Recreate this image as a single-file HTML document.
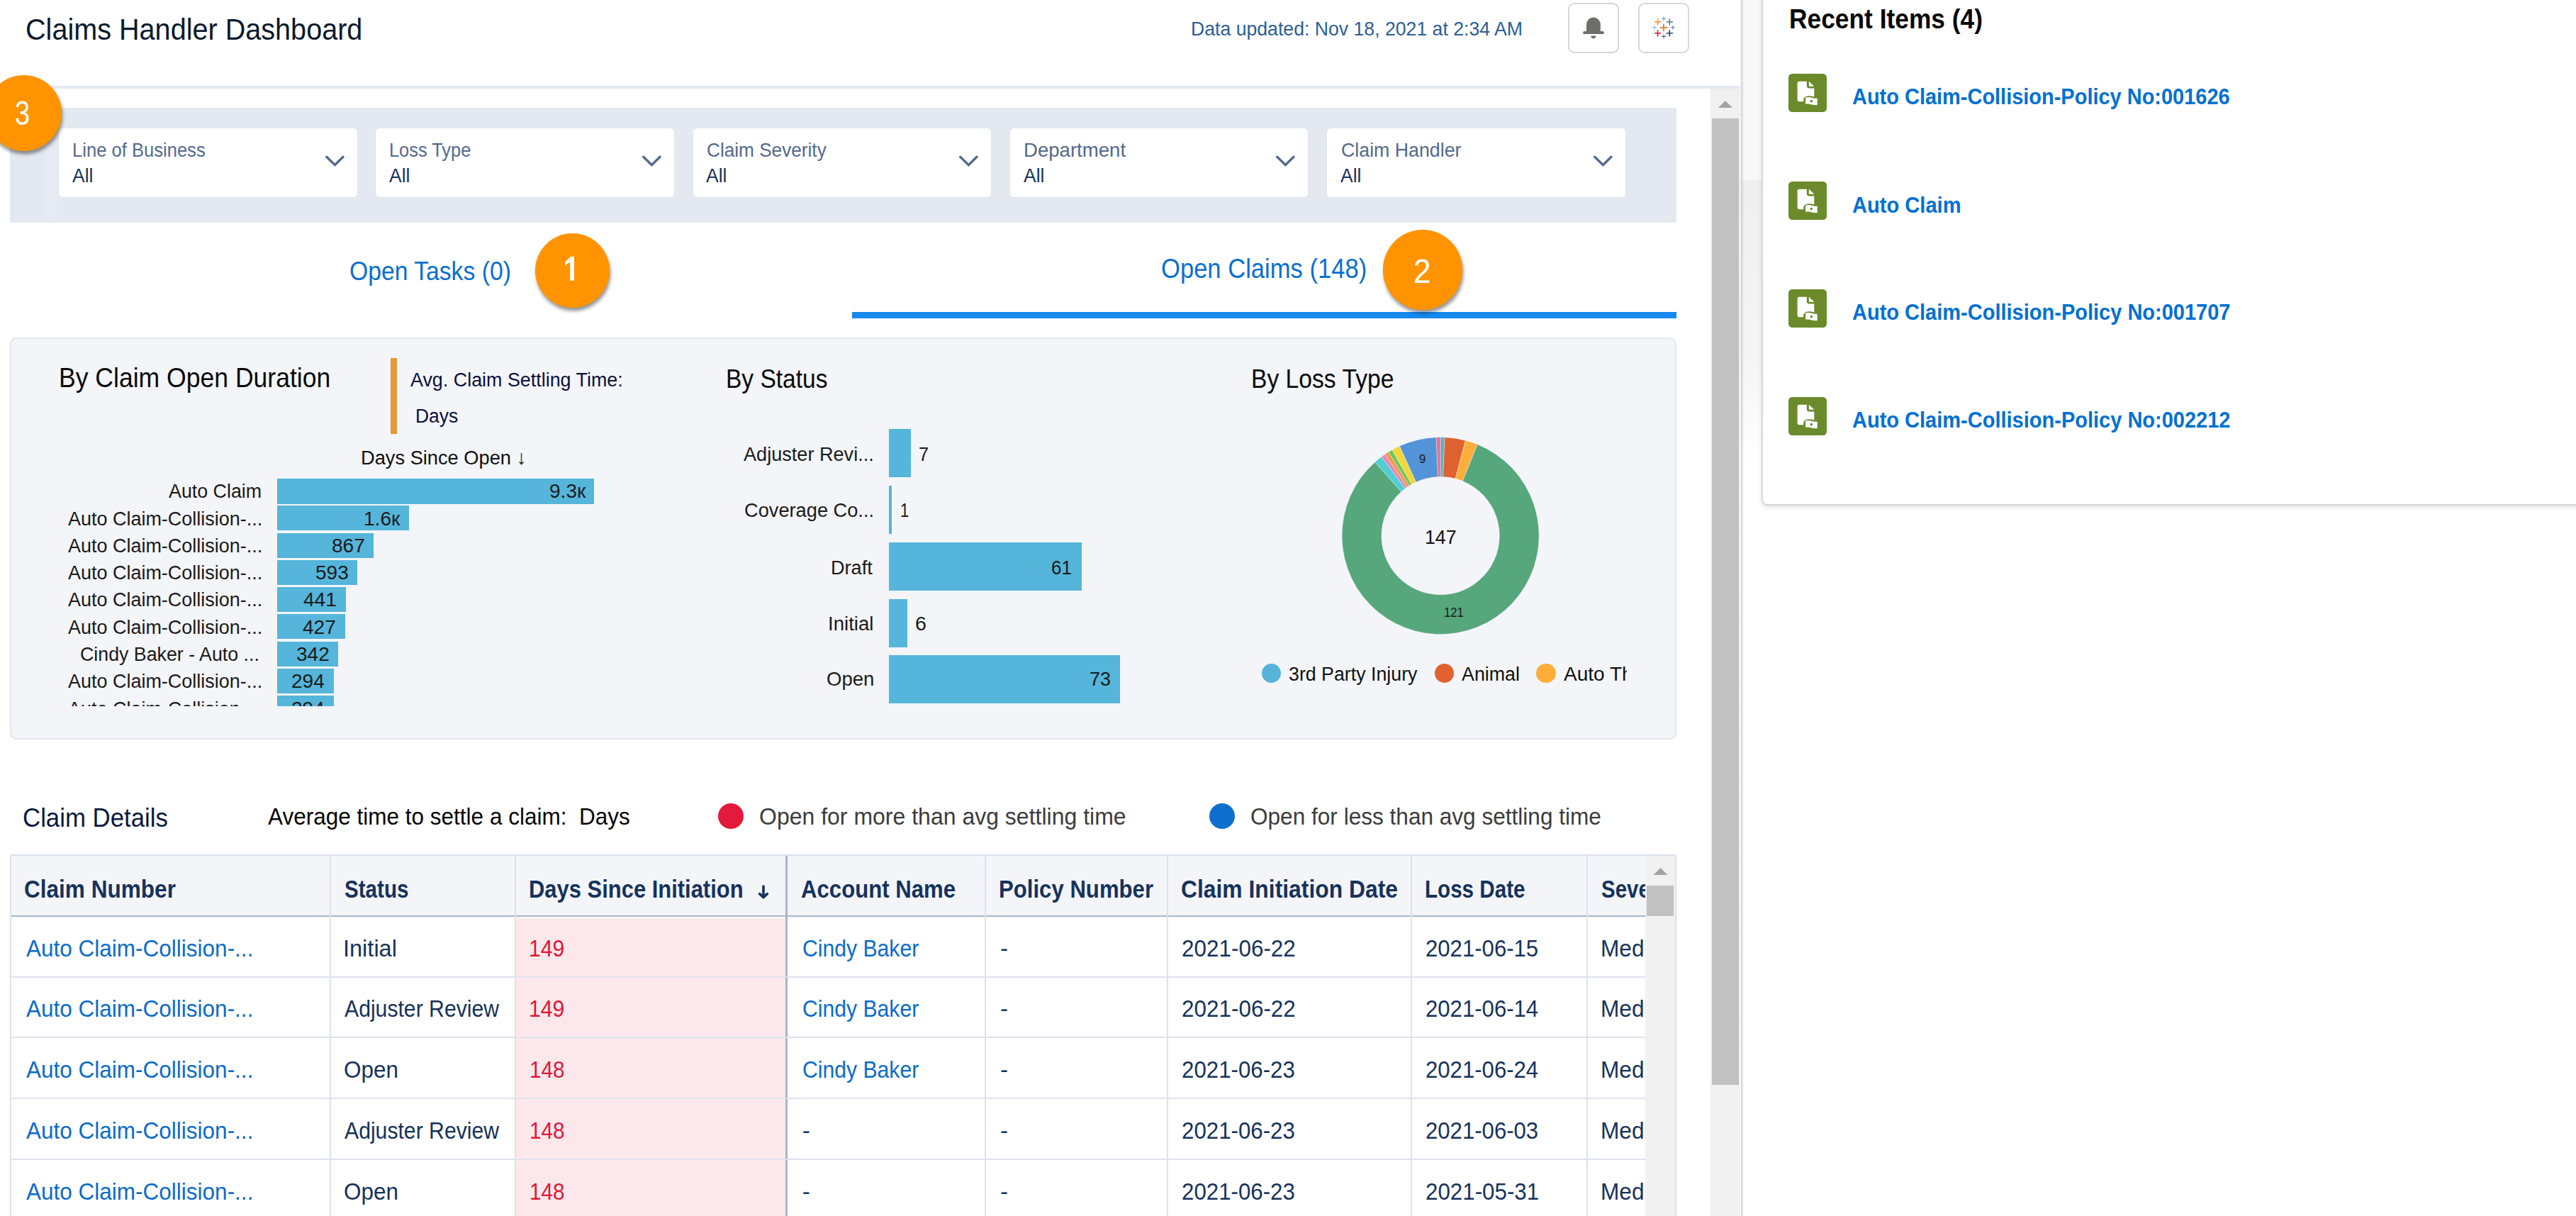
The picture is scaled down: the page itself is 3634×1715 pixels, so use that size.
<!DOCTYPE html>
<html><head><meta charset='utf-8'><title>Claims Handler Dashboard</title>
<style>
html,body{margin:0;padding:0;width:3634px;height:1715px;overflow:hidden;background:#fff;position:relative}
.t{position:absolute;white-space:pre;line-height:normal}
</style></head><body>
<div style='position:absolute;left:2212.00px;top:3.50px;width:71.50px;height:71.00px;box-sizing:border-box;border:2px solid #d9d7d5;border-radius:9px;background:#fff'></div><div style='position:absolute;left:2311.00px;top:3.50px;width:71.50px;height:71.00px;box-sizing:border-box;border:2px solid #d9d7d5;border-radius:9px;background:#fff'></div><svg style='position:absolute;left:2212px;top:3.5px' width='71.5' height='71' viewBox='0 0 71.5 71'>
<path d='M26 40 V30.5 A9.9 10 0 0 1 45.8 30.5 V40 H48.5 A2.4 2.2 0 0 1 50.9 42.2 A1.7 1.7 0 0 1 49.2 43.9 H22.7 A1.7 1.7 0 0 1 21 42.2 A2.4 2.2 0 0 1 23.4 40 Z' fill='#706e6b'/>
<path d='M32.3 46.5 H39.4 A3.55 3.7 0 0 1 32.3 46.5 Z' fill='#706e6b'/>
</svg><svg style='position:absolute;left:2311px;top:0' width='72' height='80' viewBox='2311 0 72 80'><path d='M2341.8 38.8 H2352.2 M2347 33.599999999999994 V44.0' stroke='#e8762c' stroke-width='1.8' fill='none'/><path d='M2334.0 30.9 H2343.2 M2338.6 26.299999999999997 V35.5' stroke='#eb9a3a' stroke-width='1.6' fill='none'/><path d='M2350.7000000000003 30.9 H2359.9 M2355.3 26.299999999999997 V35.5' stroke='#5b879b' stroke-width='1.6' fill='none'/><path d='M2334.0 46.8 H2343.2 M2338.6 42.199999999999996 V51.4' stroke='#c72035' stroke-width='1.6' fill='none'/><path d='M2350.7000000000003 46.8 H2359.9 M2355.3 42.199999999999996 V51.4' stroke='#1f457e' stroke-width='1.6' fill='none'/><path d='M2344.0 26.4 H2350.0 M2347 23.4 V29.4' stroke='#7ba4b0' stroke-width='1.1' fill='none'/><path d='M2331.0 38.8 H2337.0 M2334 35.8 V41.8' stroke='#8fb3bd' stroke-width='1.1' fill='none'/><path d='M2356.8 38.8 H2362.8 M2359.8 35.8 V41.8' stroke='#6b6fa6' stroke-width='1.1' fill='none'/><path d='M2344.0 51.4 H2350.0 M2347 48.4 V54.4' stroke='#5d6196' stroke-width='1.1' fill='none'/></svg><div style='position:absolute;left:14.00px;top:120.80px;width:2441.00px;height:3.90px;background:#e3e9f1'></div><div style='position:absolute;left:14.00px;top:152.00px;width:2351.00px;height:162.00px;background:#e4e9f1'></div><div style='position:absolute;left:62.60px;top:152.00px;width:18.50px;height:162.00px;background:#e6eaf2'></div><div style='position:absolute;left:83.00px;top:181.30px;width:420.50px;height:96.70px;background:#fff;border-radius:5.5px;box-shadow:0 0 0 0.8px #dde3ec'></div><svg style='position:absolute;left:455.50px;top:212px' width='34' height='30' viewBox='0 0 34 30'><path d='M4.7 9.2 L16.4 20.6 L28 9.2' stroke='#54698d' stroke-width='3.4' stroke-linecap='round' fill='none'/></svg><div style='position:absolute;left:530.25px;top:181.30px;width:420.50px;height:96.70px;background:#fff;border-radius:5.5px;box-shadow:0 0 0 0.8px #dde3ec'></div><svg style='position:absolute;left:902.75px;top:212px' width='34' height='30' viewBox='0 0 34 30'><path d='M4.7 9.2 L16.4 20.6 L28 9.2' stroke='#54698d' stroke-width='3.4' stroke-linecap='round' fill='none'/></svg><div style='position:absolute;left:977.50px;top:181.30px;width:420.50px;height:96.70px;background:#fff;border-radius:5.5px;box-shadow:0 0 0 0.8px #dde3ec'></div><svg style='position:absolute;left:1350.00px;top:212px' width='34' height='30' viewBox='0 0 34 30'><path d='M4.7 9.2 L16.4 20.6 L28 9.2' stroke='#54698d' stroke-width='3.4' stroke-linecap='round' fill='none'/></svg><div style='position:absolute;left:1424.75px;top:181.30px;width:420.50px;height:96.70px;background:#fff;border-radius:5.5px;box-shadow:0 0 0 0.8px #dde3ec'></div><svg style='position:absolute;left:1797.25px;top:212px' width='34' height='30' viewBox='0 0 34 30'><path d='M4.7 9.2 L16.4 20.6 L28 9.2' stroke='#54698d' stroke-width='3.4' stroke-linecap='round' fill='none'/></svg><div style='position:absolute;left:1872.00px;top:181.30px;width:420.50px;height:96.70px;background:#fff;border-radius:5.5px;box-shadow:0 0 0 0.8px #dde3ec'></div><svg style='position:absolute;left:2244.50px;top:212px' width='34' height='30' viewBox='0 0 34 30'><path d='M4.7 9.2 L16.4 20.6 L28 9.2' stroke='#54698d' stroke-width='3.4' stroke-linecap='round' fill='none'/></svg><div style='position:absolute;left:1202.00px;top:440.00px;width:1163.00px;height:8.80px;background:#1589ee'></div><div style='position:absolute;left:14.00px;top:476.00px;width:2351.00px;height:566.80px;box-sizing:border-box;background:#f3f5f9;border:2px solid #e2e7ef;border-radius:9px'></div><div style='position:absolute;left:550.90px;top:505.00px;width:9.00px;height:106.80px;background:#e8963a'></div><div style='position:absolute;left:15px;top:660px;width:885px;height:336.3px;overflow:hidden'><div style='position:absolute;left:376.20px;top:15.40px;width:446.70px;height:35.2px;background:#55b5da'></div></div><div style='position:absolute;left:15px;top:660px;width:885px;height:336.3px;overflow:hidden'><div style='position:absolute;left:376.20px;top:53.10px;width:186.20px;height:35.2px;background:#55b5da'></div></div><div style='position:absolute;left:15px;top:660px;width:885px;height:336.3px;overflow:hidden'><div style='position:absolute;left:376.20px;top:91.70px;width:136.10px;height:35.2px;background:#55b5da'></div></div><div style='position:absolute;left:15px;top:660px;width:885px;height:336.3px;overflow:hidden'><div style='position:absolute;left:376.20px;top:130.00px;width:112.60px;height:35.2px;background:#55b5da'></div></div><div style='position:absolute;left:15px;top:660px;width:885px;height:336.3px;overflow:hidden'><div style='position:absolute;left:376.20px;top:168.30px;width:97.00px;height:35.2px;background:#55b5da'></div></div><div style='position:absolute;left:15px;top:660px;width:885px;height:336.3px;overflow:hidden'><div style='position:absolute;left:376.20px;top:206.30px;width:95.60px;height:35.2px;background:#55b5da'></div></div><div style='position:absolute;left:15px;top:660px;width:885px;height:336.3px;overflow:hidden'><div style='position:absolute;left:376.20px;top:244.60px;width:85.50px;height:35.2px;background:#55b5da'></div></div><div style='position:absolute;left:15px;top:660px;width:885px;height:336.3px;overflow:hidden'><div style='position:absolute;left:376.20px;top:282.90px;width:79.40px;height:35.2px;background:#55b5da'></div></div><div style='position:absolute;left:15px;top:660px;width:885px;height:336.3px;overflow:hidden'><div style='position:absolute;left:376.20px;top:321.20px;width:79.40px;height:35.2px;background:#55b5da'></div></div><div style='position:absolute;left:1253.50px;top:605.20px;width:31.30px;height:68.00px;background:#55b5da'></div><div style='position:absolute;left:1253.50px;top:685.00px;width:4.70px;height:68.00px;background:#55b5da'></div><div style='position:absolute;left:1253.50px;top:764.60px;width:272.30px;height:68.00px;background:#55b5da'></div><div style='position:absolute;left:1253.50px;top:844.50px;width:26.90px;height:68.00px;background:#55b5da'></div><div style='position:absolute;left:1253.50px;top:924.40px;width:326.30px;height:68.00px;background:#55b5da'></div><svg style='position:absolute;left:1880px;top:600px' width='310' height='310' viewBox='1880 600 310 310'><path d='M2032.10 616.60 A139 139 0 0 1 2038.04 616.73 L2035.66 672.48 A83.2 83.2 0 0 0 2032.10 672.40 Z' fill='#4eb3cf' stroke='#f3f5f9' stroke-opacity='0.6' stroke-width='0.7'/><path d='M2038.04 616.73 A139 139 0 0 1 2067.36 621.15 L2053.20 675.12 A83.2 83.2 0 0 0 2035.66 672.48 Z' fill='#df6130' stroke='#f3f5f9' stroke-opacity='0.6' stroke-width='0.7'/><path d='M2067.36 621.15 A139 139 0 0 1 2084.26 626.76 L2063.32 678.48 A83.2 83.2 0 0 0 2053.20 675.12 Z' fill='#fdae3a' stroke='#f3f5f9' stroke-opacity='0.6' stroke-width='0.7'/><path d='M2084.26 626.76 A139 139 0 1 1 1939.76 651.71 L1976.83 693.41 A83.2 83.2 0 1 0 2063.32 678.48 Z' fill='#56a77b' stroke='#f3f5f9' stroke-opacity='0.6' stroke-width='0.7'/><path d='M1939.76 651.71 A139 139 0 0 1 1948.96 644.20 L1982.34 688.92 A83.2 83.2 0 0 0 1976.83 693.41 Z' fill='#4fcfd5' stroke='#f3f5f9' stroke-opacity='0.6' stroke-width='0.7'/><path d='M1948.96 644.20 A139 139 0 0 1 1953.80 640.75 L1985.23 686.86 A83.2 83.2 0 0 0 1982.34 688.92 Z' fill='#e08bb9' stroke='#f3f5f9' stroke-opacity='0.6' stroke-width='0.7'/><path d='M1953.80 640.75 A139 139 0 0 1 1958.78 637.51 L1988.21 684.92 A83.2 83.2 0 0 0 1985.23 686.86 Z' fill='#f29a4c' stroke='#f3f5f9' stroke-opacity='0.6' stroke-width='0.7'/><path d='M1958.78 637.51 A139 139 0 0 1 1963.89 634.49 L1991.27 683.11 A83.2 83.2 0 0 0 1988.21 684.92 Z' fill='#6cc757' stroke='#f3f5f9' stroke-opacity='0.6' stroke-width='0.7'/><path d='M1963.89 634.49 A139 139 0 0 1 1974.48 629.11 L1997.61 679.89 A83.2 83.2 0 0 0 1991.27 683.11 Z' fill='#f2d73c' stroke='#f3f5f9' stroke-opacity='0.6' stroke-width='0.7'/><path d='M1974.48 629.11 A139 139 0 0 1 2026.16 616.73 L2028.54 672.48 A83.2 83.2 0 0 0 1997.61 679.89 Z' fill='#5394d8' stroke='#f3f5f9' stroke-opacity='0.6' stroke-width='0.7'/><path d='M2026.16 616.73 A139 139 0 0 1 2032.10 616.60 L2032.10 672.40 A83.2 83.2 0 0 0 2028.54 672.48 Z' fill='#e8718a' stroke='#f3f5f9' stroke-opacity='0.6' stroke-width='0.7'/></svg><div style='position:absolute;left:1780.05px;top:935.75px;width:27.30px;height:27.30px;background:#56b4d9;border-radius:50%'></div><div style='position:absolute;left:2023.95px;top:935.75px;width:27.30px;height:27.30px;background:#e0612f;border-radius:50%'></div><div style='position:absolute;left:2167.25px;top:935.75px;width:27.30px;height:27.30px;background:#ffae3a;border-radius:50%'></div><div style='position:absolute;left:1012.90px;top:1132.90px;width:36.10px;height:36.00px;background:#e31a3b;border-radius:50%'></div><div style='position:absolute;left:1705.90px;top:1132.90px;width:36.00px;height:36.00px;background:#0f6fcf;border-radius:50%'></div><div style='position:absolute;left:14.00px;top:1205.00px;width:2351.00px;height:515.00px;box-sizing:border-box;border:2px solid #dbe2eb;border-bottom:none;background:#fff'></div><div style='position:absolute;left:16.00px;top:1207.00px;width:2305.00px;height:84.00px;background:#f3f5f9'></div><div style='position:absolute;left:727.00px;top:1295.00px;width:381.00px;height:420.00px;background:#fce8ea'></div><div style='position:absolute;left:16.00px;top:1291.00px;width:2305.00px;height:2.00px;background:#a7b6c8'></div><div style='position:absolute;left:465.00px;top:1207.00px;width:2.00px;height:508.00px;background:#dde3ec'></div><div style='position:absolute;left:726.00px;top:1207.00px;width:2.00px;height:508.00px;background:#dde3ec'></div><div style='position:absolute;left:1389.00px;top:1207.00px;width:2.00px;height:508.00px;background:#dde3ec'></div><div style='position:absolute;left:1646.00px;top:1207.00px;width:2.00px;height:508.00px;background:#dde3ec'></div><div style='position:absolute;left:1990.00px;top:1207.00px;width:2.00px;height:508.00px;background:#dde3ec'></div><div style='position:absolute;left:2238.00px;top:1207.00px;width:2.00px;height:508.00px;background:#dde3ec'></div><div style='position:absolute;left:1108.00px;top:1207.00px;width:3.00px;height:508.00px;background:#a9b6c6'></div><div style='position:absolute;left:16.00px;top:1377.00px;width:2305.00px;height:2.00px;background:#dde3ec'></div><div style='position:absolute;left:16.00px;top:1462.00px;width:2305.00px;height:2.00px;background:#dde3ec'></div><div style='position:absolute;left:16.00px;top:1548.00px;width:2305.00px;height:2.00px;background:#dde3ec'></div><div style='position:absolute;left:16.00px;top:1634.00px;width:2305.00px;height:2.00px;background:#dde3ec'></div><svg style='position:absolute;left:1068px;top:1244px' width='20' height='28' viewBox='0 0 20 28'><path d='M9 6 V21' stroke='#16325c' stroke-width='3.6' stroke-linecap='round' fill='none'/><path d='M3.6 16.6 L9 21.6 L14.4 16.6' stroke='#16325c' stroke-width='3.6' stroke-linecap='round' fill='none'/></svg><div style='position:absolute;left:2321.00px;top:1207.00px;width:42.00px;height:508.00px;background:#f1f1f1'></div><svg style='position:absolute;left:2320.6px;top:1215px' width='42' height='30'><path d='M11.5 19 L21.5 9 L31.5 19 Z' fill='#a3a3a3'/></svg><div style='position:absolute;left:2323.00px;top:1249.00px;width:38.00px;height:42.50px;background:#c1c1c1'></div><div style='position:absolute;left:2413.00px;top:124.70px;width:42.00px;height:1590.30px;background:#f0f0f0'></div><svg style='position:absolute;left:2413px;top:130px' width='42' height='30'><path d='M11 22 L21 12 L31 22 Z' fill='#a3a3a3'/></svg><div style='position:absolute;left:2415.00px;top:167.00px;width:38.00px;height:1362.60px;background:#c1c1c1'></div><div style='position:absolute;left:2455.00px;top:0.00px;width:32.00px;height:1715.00px;background:linear-gradient(#f8f8f8 0, #f8f8f8 254px, #efefef 255px, #f6f6f6 520px, #ffffff 650px)'></div><div style='position:absolute;left:2455.50px;top:0.00px;width:2.70px;height:1715.00px;background:#d6d6d6'></div><div style='position:absolute;left:2458.20px;top:0.00px;width:3.80px;height:1715.00px;background:linear-gradient(90deg, rgba(0,0,0,0.05), rgba(0,0,0,0))'></div><div style='position:absolute;left:2485.00px;top:-10.00px;width:1165.00px;height:722.80px;box-sizing:border-box;background:#fff;border:2px solid #d9d7d5;border-radius:0 0 0 8px;box-shadow:0 3px 6px rgba(0,0,0,0.10)'></div><svg style='position:absolute;left:2523px;top:104px' width='54' height='54' viewBox='0 0 54 54'>
<rect width='54' height='54' rx='5.5' fill='#6b8a2b'/>
<path d='M15.4 10.7 H25.8 V17 Q25.8 20.4 29.2 20.4 H36.3 V32.6 Q30 30.3 25.5 31.8 Q21.2 33.3 21.2 37 V39.2 H15.3 Q12.6 39.2 12.6 36.5 V13.4 Q12.6 10.7 15.4 10.7 Z' fill='#fff'/>
<path d='M28.9 10.8 L36.3 17.8 H28.9 Z' fill='#fff'/>
<path d='M24 33.6 Q28 32.3 32 33.6 Q36 35 40.7 34.8 V44 Q36.5 44.6 32 43.3 Q28 42 24 42.6 Z' fill='#fff'/>
<circle cx='32.3' cy='38.6' r='1.8' fill='#6b8a2b'/>
</svg><svg style='position:absolute;left:2523px;top:256px' width='54' height='54' viewBox='0 0 54 54'>
<rect width='54' height='54' rx='5.5' fill='#6b8a2b'/>
<path d='M15.4 10.7 H25.8 V17 Q25.8 20.4 29.2 20.4 H36.3 V32.6 Q30 30.3 25.5 31.8 Q21.2 33.3 21.2 37 V39.2 H15.3 Q12.6 39.2 12.6 36.5 V13.4 Q12.6 10.7 15.4 10.7 Z' fill='#fff'/>
<path d='M28.9 10.8 L36.3 17.8 H28.9 Z' fill='#fff'/>
<path d='M24 33.6 Q28 32.3 32 33.6 Q36 35 40.7 34.8 V44 Q36.5 44.6 32 43.3 Q28 42 24 42.6 Z' fill='#fff'/>
<circle cx='32.3' cy='38.6' r='1.8' fill='#6b8a2b'/>
</svg><svg style='position:absolute;left:2523px;top:407.5px' width='54' height='54' viewBox='0 0 54 54'>
<rect width='54' height='54' rx='5.5' fill='#6b8a2b'/>
<path d='M15.4 10.7 H25.8 V17 Q25.8 20.4 29.2 20.4 H36.3 V32.6 Q30 30.3 25.5 31.8 Q21.2 33.3 21.2 37 V39.2 H15.3 Q12.6 39.2 12.6 36.5 V13.4 Q12.6 10.7 15.4 10.7 Z' fill='#fff'/>
<path d='M28.9 10.8 L36.3 17.8 H28.9 Z' fill='#fff'/>
<path d='M24 33.6 Q28 32.3 32 33.6 Q36 35 40.7 34.8 V44 Q36.5 44.6 32 43.3 Q28 42 24 42.6 Z' fill='#fff'/>
<circle cx='32.3' cy='38.6' r='1.8' fill='#6b8a2b'/>
</svg><svg style='position:absolute;left:2523px;top:560px' width='54' height='54' viewBox='0 0 54 54'>
<rect width='54' height='54' rx='5.5' fill='#6b8a2b'/>
<path d='M15.4 10.7 H25.8 V17 Q25.8 20.4 29.2 20.4 H36.3 V32.6 Q30 30.3 25.5 31.8 Q21.2 33.3 21.2 37 V39.2 H15.3 Q12.6 39.2 12.6 36.5 V13.4 Q12.6 10.7 15.4 10.7 Z' fill='#fff'/>
<path d='M28.9 10.8 L36.3 17.8 H28.9 Z' fill='#fff'/>
<path d='M24 33.6 Q28 32.3 32 33.6 Q36 35 40.7 34.8 V44 Q36.5 44.6 32 43.3 Q28 42 24 42.6 Z' fill='#fff'/>
<circle cx='32.3' cy='38.6' r='1.8' fill='#6b8a2b'/>
</svg>
<div class='t' style='left:35.83px;top:17.68px;font-size:42.44px;font-weight:400;color:#0b1a2c;font-family:"Liberation Sans",sans-serif;transform:scaleX(0.9331);transform-origin:0 0;'>Claims Handler Dashboard</div><div class='t' style='left:1679.75px;top:25.06px;font-size:27.33px;font-weight:400;color:#2d5e96;font-family:"Liberation Sans",sans-serif;transform:scaleX(0.9747);transform-origin:0 0;'>Data updated: Nov 18, 2021 at 2:34 AM</div><div class='t' style='left:101.93px;top:195.96px;font-size:27.33px;font-weight:400;color:#54698d;font-family:"Liberation Sans",sans-serif;transform:scaleX(0.9360);transform-origin:0 0;'>Line of Business</div><div class='t' style='left:101.90px;top:231.90px;font-size:27.62px;font-weight:400;color:#16325c;font-family:"Liberation Sans",sans-serif;transform:scaleX(0.9577);transform-origin:0 0;'>All</div><div class='t' style='left:549.19px;top:195.96px;font-size:27.33px;font-weight:400;color:#54698d;font-family:"Liberation Sans",sans-serif;transform:scaleX(0.9291);transform-origin:0 0;'>Loss Type</div><div class='t' style='left:549.15px;top:231.90px;font-size:27.62px;font-weight:400;color:#16325c;font-family:"Liberation Sans",sans-serif;transform:scaleX(0.9577);transform-origin:0 0;'>All</div><div class='t' style='left:997.34px;top:195.96px;font-size:27.33px;font-weight:400;color:#54698d;font-family:"Liberation Sans",sans-serif;transform:scaleX(0.9578);transform-origin:0 0;'>Claim Severity</div><div class='t' style='left:996.40px;top:231.90px;font-size:27.62px;font-weight:400;color:#16325c;font-family:"Liberation Sans",sans-serif;transform:scaleX(0.9577);transform-origin:0 0;'>All</div><div class='t' style='left:1443.53px;top:195.96px;font-size:27.33px;font-weight:400;color:#54698d;font-family:"Liberation Sans",sans-serif;transform:scaleX(1.0091);transform-origin:0 0;'>Department</div><div class='t' style='left:1443.65px;top:231.90px;font-size:27.62px;font-weight:400;color:#16325c;font-family:"Liberation Sans",sans-serif;transform:scaleX(0.9577);transform-origin:0 0;'>All</div><div class='t' style='left:1891.82px;top:195.96px;font-size:27.33px;font-weight:400;color:#54698d;font-family:"Liberation Sans",sans-serif;transform:scaleX(0.9788);transform-origin:0 0;'>Claim Handler</div><div class='t' style='left:1890.90px;top:231.90px;font-size:27.62px;font-weight:400;color:#16325c;font-family:"Liberation Sans",sans-serif;transform:scaleX(0.9577);transform-origin:0 0;'>All</div><div class='t' style='left:493.20px;top:360.82px;font-size:37.65px;font-weight:400;color:#0a6fd0;font-family:"Liberation Sans",sans-serif;transform:scaleX(0.8952);transform-origin:0 0;'>Open Tasks (0)</div><div class='t' style='left:1638.39px;top:357.63px;font-size:38.08px;font-weight:400;color:#0a6fd0;font-family:"Liberation Sans",sans-serif;transform:scaleX(0.9082);transform-origin:0 0;'>Open Claims (148)</div><div class='t' style='left:83.20px;top:511.63px;font-size:38.08px;font-weight:400;color:#0a0a0a;font-family:"Liberation Sans",sans-serif;transform:scaleX(0.9334);transform-origin:0 0;'>By Claim Open Duration</div><div class='t' style='left:578.90px;top:519.34px;font-size:28.34px;font-weight:400;color:#0c103c;font-family:"Liberation Sans",sans-serif;transform:scaleX(0.9486);transform-origin:0 0;'>Avg. Claim Settling Time:</div><div class='t' style='left:585.83px;top:569.84px;font-size:28.34px;font-weight:400;color:#0c103c;font-family:"Liberation Sans",sans-serif;transform:scaleX(0.9346);transform-origin:0 0;'>Days</div><div class='t' style='left:508.98px;top:629.14px;font-size:28.34px;font-weight:400;color:#111;font-family:"Liberation Sans",sans-serif;transform:scaleX(0.9616);transform-origin:0 0;'>Days Since Open ↓</div><div style='position:absolute;left:15px;top:660px;width:885px;height:336.29999999999995px;overflow:hidden'><div style='position:absolute;left:-15px;top:-660px;width:3634px;height:1715px'><div class='t' style='left:238.40px;top:676.24px;font-size:28.34px;font-weight:400;color:#1a1a1a;font-family:"Liberation Sans",sans-serif;transform:scaleX(0.9464);transform-origin:0 0;'>Auto Claim</div></div></div><div style='position:absolute;left:15px;top:660px;width:885px;height:336.29999999999995px;overflow:hidden'><div style='position:absolute;left:-15px;top:-660px;width:3634px;height:1715px'><div class='t' style='left:774.64px;top:676.24px;font-size:28.34px;font-weight:400;color:#1a1a1a;font-family:"Liberation Sans",sans-serif;transform:scaleX(0.9900);transform-origin:0 0;'>9.3к</div></div></div><div style='position:absolute;left:15px;top:660px;width:885px;height:336.29999999999995px;overflow:hidden'><div style='position:absolute;left:-15px;top:-660px;width:3634px;height:1715px'><div class='t' style='left:95.60px;top:714.54px;font-size:28.34px;font-weight:400;color:#1a1a1a;font-family:"Liberation Sans",sans-serif;transform:scaleX(0.9517);transform-origin:0 0;'>Auto Claim-Collision-...</div></div></div><div style='position:absolute;left:15px;top:660px;width:885px;height:336.29999999999995px;overflow:hidden'><div style='position:absolute;left:-15px;top:-660px;width:3634px;height:1715px'><div class='t' style='left:513.14px;top:714.54px;font-size:28.34px;font-weight:400;color:#1a1a1a;font-family:"Liberation Sans",sans-serif;transform:scaleX(0.9900);transform-origin:0 0;'>1.6к</div></div></div><div style='position:absolute;left:15px;top:660px;width:885px;height:336.29999999999995px;overflow:hidden'><div style='position:absolute;left:-15px;top:-660px;width:3634px;height:1715px'><div class='t' style='left:95.60px;top:752.84px;font-size:28.34px;font-weight:400;color:#1a1a1a;font-family:"Liberation Sans",sans-serif;transform:scaleX(0.9517);transform-origin:0 0;'>Auto Claim-Collision-...</div></div></div><div style='position:absolute;left:15px;top:660px;width:885px;height:336.29999999999995px;overflow:hidden'><div style='position:absolute;left:-15px;top:-660px;width:3634px;height:1715px'><div class='t' style='left:467.56px;top:752.84px;font-size:28.34px;font-weight:400;color:#1a1a1a;font-family:"Liberation Sans",sans-serif;transform:scaleX(0.9900);transform-origin:0 0;'>867</div></div></div><div style='position:absolute;left:15px;top:660px;width:885px;height:336.29999999999995px;overflow:hidden'><div style='position:absolute;left:-15px;top:-660px;width:3634px;height:1715px'><div class='t' style='left:95.60px;top:791.14px;font-size:28.34px;font-weight:400;color:#1a1a1a;font-family:"Liberation Sans",sans-serif;transform:scaleX(0.9517);transform-origin:0 0;'>Auto Claim-Collision-...</div></div></div><div style='position:absolute;left:15px;top:660px;width:885px;height:336.29999999999995px;overflow:hidden'><div style='position:absolute;left:-15px;top:-660px;width:3634px;height:1715px'><div class='t' style='left:445.26px;top:791.14px;font-size:28.34px;font-weight:400;color:#1a1a1a;font-family:"Liberation Sans",sans-serif;transform:scaleX(0.9900);transform-origin:0 0;'>593</div></div></div><div style='position:absolute;left:15px;top:660px;width:885px;height:336.29999999999995px;overflow:hidden'><div style='position:absolute;left:-15px;top:-660px;width:3634px;height:1715px'><div class='t' style='left:95.60px;top:829.44px;font-size:28.34px;font-weight:400;color:#1a1a1a;font-family:"Liberation Sans",sans-serif;transform:scaleX(0.9517);transform-origin:0 0;'>Auto Claim-Collision-...</div></div></div><div style='position:absolute;left:15px;top:660px;width:885px;height:336.29999999999995px;overflow:hidden'><div style='position:absolute;left:-15px;top:-660px;width:3634px;height:1715px'><div class='t' style='left:428.16px;top:829.44px;font-size:28.34px;font-weight:400;color:#1a1a1a;font-family:"Liberation Sans",sans-serif;transform:scaleX(0.9900);transform-origin:0 0;'>441</div></div></div><div style='position:absolute;left:15px;top:660px;width:885px;height:336.29999999999995px;overflow:hidden'><div style='position:absolute;left:-15px;top:-660px;width:3634px;height:1715px'><div class='t' style='left:95.60px;top:867.74px;font-size:28.34px;font-weight:400;color:#1a1a1a;font-family:"Liberation Sans",sans-serif;transform:scaleX(0.9517);transform-origin:0 0;'>Auto Claim-Collision-...</div></div></div><div style='position:absolute;left:15px;top:660px;width:885px;height:336.29999999999995px;overflow:hidden'><div style='position:absolute;left:-15px;top:-660px;width:3634px;height:1715px'><div class='t' style='left:426.76px;top:867.74px;font-size:28.34px;font-weight:400;color:#1a1a1a;font-family:"Liberation Sans",sans-serif;transform:scaleX(0.9900);transform-origin:0 0;'>427</div></div></div><div style='position:absolute;left:15px;top:660px;width:885px;height:336.29999999999995px;overflow:hidden'><div style='position:absolute;left:-15px;top:-660px;width:3634px;height:1715px'><div class='t' style='left:113.46px;top:906.04px;font-size:28.34px;font-weight:400;color:#1a1a1a;font-family:"Liberation Sans",sans-serif;transform:scaleX(0.9446);transform-origin:0 0;'>Cindy Baker - Auto ...</div></div></div><div style='position:absolute;left:15px;top:660px;width:885px;height:336.29999999999995px;overflow:hidden'><div style='position:absolute;left:-15px;top:-660px;width:3634px;height:1715px'><div class='t' style='left:418.36px;top:906.04px;font-size:28.34px;font-weight:400;color:#1a1a1a;font-family:"Liberation Sans",sans-serif;transform:scaleX(0.9900);transform-origin:0 0;'>342</div></div></div><div style='position:absolute;left:15px;top:660px;width:885px;height:336.29999999999995px;overflow:hidden'><div style='position:absolute;left:-15px;top:-660px;width:3634px;height:1715px'><div class='t' style='left:95.60px;top:944.34px;font-size:28.34px;font-weight:400;color:#1a1a1a;font-family:"Liberation Sans",sans-serif;transform:scaleX(0.9517);transform-origin:0 0;'>Auto Claim-Collision-...</div></div></div><div style='position:absolute;left:15px;top:660px;width:885px;height:336.29999999999995px;overflow:hidden'><div style='position:absolute;left:-15px;top:-660px;width:3634px;height:1715px'><div class='t' style='left:411.16px;top:944.34px;font-size:28.34px;font-weight:400;color:#1a1a1a;font-family:"Liberation Sans",sans-serif;transform:scaleX(0.9900);transform-origin:0 0;'>294</div></div></div><div style='position:absolute;left:15px;top:660px;width:885px;height:336.29999999999995px;overflow:hidden'><div style='position:absolute;left:-15px;top:-660px;width:3634px;height:1715px'><div class='t' style='left:95.60px;top:982.64px;font-size:28.34px;font-weight:400;color:#1a1a1a;font-family:"Liberation Sans",sans-serif;transform:scaleX(0.9517);transform-origin:0 0;'>Auto Claim-Collision-...</div></div></div><div style='position:absolute;left:15px;top:660px;width:885px;height:336.29999999999995px;overflow:hidden'><div style='position:absolute;left:-15px;top:-660px;width:3634px;height:1715px'><div class='t' style='left:411.16px;top:982.64px;font-size:28.34px;font-weight:400;color:#1a1a1a;font-family:"Liberation Sans",sans-serif;transform:scaleX(0.9900);transform-origin:0 0;'>294</div></div></div><div class='t' style='left:1023.93px;top:513.02px;font-size:37.65px;font-weight:400;color:#0a0a0a;font-family:"Liberation Sans",sans-serif;transform:scaleX(0.8905);transform-origin:0 0;'>By Status</div><div class='t' style='left:1049.20px;top:624.34px;font-size:28.34px;font-weight:400;color:#1a1a1a;font-family:"Liberation Sans",sans-serif;transform:scaleX(0.9569);transform-origin:0 0;'>Adjuster Revi...</div><div class='t' style='left:1296.41px;top:624.34px;font-size:28.34px;font-weight:400;color:#1a1a1a;font-family:"Liberation Sans",sans-serif;transform:scaleX(0.8929);transform-origin:0 0;'>7</div><div class='t' style='left:1049.94px;top:703.24px;font-size:28.34px;font-weight:400;color:#1a1a1a;font-family:"Liberation Sans",sans-serif;transform:scaleX(0.9608);transform-origin:0 0;'>Coverage Co...</div><div class='t' style='left:1270.15px;top:703.24px;font-size:28.34px;font-weight:400;color:#1a1a1a;font-family:"Liberation Sans",sans-serif;transform:scaleX(0.7769);transform-origin:0 0;'>1</div><div class='t' style='left:1172.39px;top:784.14px;font-size:28.34px;font-weight:400;color:#1a1a1a;font-family:"Liberation Sans",sans-serif;transform:scaleX(0.9560);transform-origin:0 0;'>Draft</div><div class='t' style='left:1483.08px;top:784.14px;font-size:28.34px;font-weight:400;color:#1a1a1a;font-family:"Liberation Sans",sans-serif;transform:scaleX(0.9175);transform-origin:0 0;'>61</div><div class='t' style='left:1167.95px;top:863.34px;font-size:28.34px;font-weight:400;color:#1a1a1a;font-family:"Liberation Sans",sans-serif;transform:scaleX(0.9755);transform-origin:0 0;'>Initial</div><div class='t' style='left:1291.19px;top:863.34px;font-size:28.34px;font-weight:400;color:#1a1a1a;font-family:"Liberation Sans",sans-serif;transform:scaleX(1.0143);transform-origin:0 0;'>6</div><div class='t' style='left:1165.53px;top:941.24px;font-size:28.34px;font-weight:400;color:#1a1a1a;font-family:"Liberation Sans",sans-serif;transform:scaleX(0.9723);transform-origin:0 0;'>Open</div><div class='t' style='left:1537.35px;top:941.24px;font-size:28.34px;font-weight:400;color:#1a1a1a;font-family:"Liberation Sans",sans-serif;transform:scaleX(0.9511);transform-origin:0 0;'>73</div><div class='t' style='left:1764.92px;top:513.02px;font-size:37.65px;font-weight:400;color:#0a0a0a;font-family:"Liberation Sans",sans-serif;transform:scaleX(0.8940);transform-origin:0 0;'>By Loss Type</div><div class='t' style='left:2010.01px;top:741.34px;font-size:28.34px;font-weight:400;color:#111;font-family:"Liberation Sans",sans-serif;transform:scaleX(0.9436);transform-origin:0 0;'>147</div><div class='t' style='left:2002.00px;top:636.97px;font-size:17.15px;font-weight:400;color:#1a1a1a;font-family:"Liberation Sans",sans-serif;transform:scaleX(0.9667);transform-origin:0 0;'>9</div><div class='t' style='left:2036.90px;top:853.16px;font-size:18.60px;font-weight:400;color:#1a1a1a;font-family:"Liberation Sans",sans-serif;transform:scaleX(0.8995);transform-origin:0 0;'>121</div><div class='t' style='left:1818.36px;top:934.14px;font-size:28.34px;font-weight:400;color:#111;font-family:"Liberation Sans",sans-serif;transform:scaleX(0.9447);transform-origin:0 0;'>3rd Party Injury</div><div class='t' style='left:2062.00px;top:934.14px;font-size:28.34px;font-weight:400;color:#111;font-family:"Liberation Sans",sans-serif;transform:scaleX(0.9461);transform-origin:0 0;'>Animal</div><div style='position:absolute;left:2200px;top:920px;width:95.30000000000018px;height:70px;overflow:hidden'><div style='position:absolute;left:-2200px;top:-920px;width:3634px;height:1715px'><div class='t' style='left:2206.00px;top:934.14px;font-size:28.34px;font-weight:400;color:#111;font-family:"Liberation Sans",sans-serif;transform:scaleX(0.9900);transform-origin:0 0;'>Auto Theft</div></div></div><div class='t' style='left:32.28px;top:1131.79px;font-size:37.79px;font-weight:400;color:#0b1a3e;font-family:"Liberation Sans",sans-serif;transform:scaleX(0.9209);transform-origin:0 0;'>Claim Details</div><div class='t' style='left:378.00px;top:1132.90px;font-size:33.14px;font-weight:400;color:#050505;font-family:"Liberation Sans",sans-serif;transform:scaleX(0.9511);transform-origin:0 0;'>Average time to settle a claim:  Days</div><div class='t' style='left:1070.92px;top:1133.29px;font-size:32.70px;font-weight:400;color:#3c3c3c;font-family:"Liberation Sans",sans-serif;transform:scaleX(0.9790);transform-origin:0 0;'>Open for more than avg settling time</div><div class='t' style='left:1764.23px;top:1133.29px;font-size:32.70px;font-weight:400;color:#3c3c3c;font-family:"Liberation Sans",sans-serif;transform:scaleX(0.9659);transform-origin:0 0;'>Open for less than avg settling time</div><div class='t' style='left:33.78px;top:1235.35px;font-size:34.30px;font-weight:700;color:#16325c;font-family:"Liberation Sans",sans-serif;transform:scaleX(0.9201);transform-origin:0 0;'>Claim Number</div><div class='t' style='left:485.90px;top:1235.35px;font-size:34.30px;font-weight:700;color:#16325c;font-family:"Liberation Sans",sans-serif;transform:scaleX(0.8637);transform-origin:0 0;'>Status</div><div class='t' style='left:745.80px;top:1235.35px;font-size:34.30px;font-weight:700;color:#16325c;font-family:"Liberation Sans",sans-serif;transform:scaleX(0.9020);transform-origin:0 0;'>Days Since Initiation</div><div class='t' style='left:1129.60px;top:1235.35px;font-size:34.30px;font-weight:700;color:#16325c;font-family:"Liberation Sans",sans-serif;transform:scaleX(0.9082);transform-origin:0 0;'>Account Name</div><div class='t' style='left:1409.48px;top:1235.35px;font-size:34.30px;font-weight:700;color:#16325c;font-family:"Liberation Sans",sans-serif;transform:scaleX(0.9079);transform-origin:0 0;'>Policy Number</div><div class='t' style='left:1666.17px;top:1235.35px;font-size:34.30px;font-weight:700;color:#16325c;font-family:"Liberation Sans",sans-serif;transform:scaleX(0.9280);transform-origin:0 0;'>Claim Initiation Date</div><div class='t' style='left:2010.47px;top:1235.35px;font-size:34.30px;font-weight:700;color:#16325c;font-family:"Liberation Sans",sans-serif;transform:scaleX(0.8630);transform-origin:0 0;'>Loss Date</div><div style='position:absolute;left:2240px;top:1210px;width:80.59999999999991px;height:80px;overflow:hidden'><div style='position:absolute;left:-2240px;top:-1210px;width:3634px;height:1715px'><div class='t' style='left:2258.70px;top:1235.35px;font-size:34.30px;font-weight:700;color:#16325c;font-family:"Liberation Sans",sans-serif;transform:scaleX(0.8600);transform-origin:0 0;'>Severity</div></div></div><div class='t' style='left:36.60px;top:1318.67px;font-size:33.29px;font-weight:400;color:#0b6bcb;font-family:"Liberation Sans",sans-serif;transform:scaleX(0.9466);transform-origin:0 0;'>Auto Claim-Collision-...</div><div class='t' style='left:484.27px;top:1318.67px;font-size:33.29px;font-weight:400;color:#16325c;font-family:"Liberation Sans",sans-serif;transform:scaleX(0.9772);transform-origin:0 0;'>Initial</div><div class='t' style='left:746.48px;top:1318.67px;font-size:33.29px;font-weight:400;color:#e0173b;font-family:"Liberation Sans",sans-serif;transform:scaleX(0.9077);transform-origin:0 0;'>149</div><div class='t' style='left:1131.79px;top:1318.67px;font-size:33.29px;font-weight:400;color:#0b6bcb;font-family:"Liberation Sans",sans-serif;transform:scaleX(0.9061);transform-origin:0 0;'>Cindy Baker</div><div class='t' style='left:1411.00px;top:1318.67px;font-size:33.29px;font-weight:400;color:#16325c;font-family:"Liberation Sans",sans-serif;'>-</div><div class='t' style='left:1666.66px;top:1318.67px;font-size:33.29px;font-weight:400;color:#16325c;font-family:"Liberation Sans",sans-serif;transform:scaleX(0.9448);transform-origin:0 0;'>2021-06-22</div><div class='t' style='left:2011.26px;top:1318.67px;font-size:33.29px;font-weight:400;color:#16325c;font-family:"Liberation Sans",sans-serif;transform:scaleX(0.9350);transform-origin:0 0;'>2021-06-15</div><div style='position:absolute;left:2240px;top:1308.8px;width:80.59999999999991px;height:60.0px;overflow:hidden'><div style='position:absolute;left:-2240px;top:-1308.8px;width:3634px;height:1715px'><div class='t' style='left:2258.10px;top:1318.67px;font-size:33.29px;font-weight:400;color:#16325c;font-family:"Liberation Sans",sans-serif;transform:scaleX(0.9500);transform-origin:0 0;'>Medium</div></div></div><div class='t' style='left:36.60px;top:1404.42px;font-size:33.29px;font-weight:400;color:#0b6bcb;font-family:"Liberation Sans",sans-serif;transform:scaleX(0.9466);transform-origin:0 0;'>Auto Claim-Collision-...</div><div class='t' style='left:485.90px;top:1404.42px;font-size:33.29px;font-weight:400;color:#16325c;font-family:"Liberation Sans",sans-serif;transform:scaleX(0.9067);transform-origin:0 0;'>Adjuster Review</div><div class='t' style='left:746.48px;top:1404.42px;font-size:33.29px;font-weight:400;color:#e0173b;font-family:"Liberation Sans",sans-serif;transform:scaleX(0.9077);transform-origin:0 0;'>149</div><div class='t' style='left:1131.79px;top:1404.42px;font-size:33.29px;font-weight:400;color:#0b6bcb;font-family:"Liberation Sans",sans-serif;transform:scaleX(0.9061);transform-origin:0 0;'>Cindy Baker</div><div class='t' style='left:1411.00px;top:1404.42px;font-size:33.29px;font-weight:400;color:#16325c;font-family:"Liberation Sans",sans-serif;'>-</div><div class='t' style='left:1666.66px;top:1404.42px;font-size:33.29px;font-weight:400;color:#16325c;font-family:"Liberation Sans",sans-serif;transform:scaleX(0.9448);transform-origin:0 0;'>2021-06-22</div><div class='t' style='left:2011.26px;top:1404.42px;font-size:33.29px;font-weight:400;color:#16325c;font-family:"Liberation Sans",sans-serif;transform:scaleX(0.9350);transform-origin:0 0;'>2021-06-14</div><div style='position:absolute;left:2240px;top:1394.55px;width:80.59999999999991px;height:60.0px;overflow:hidden'><div style='position:absolute;left:-2240px;top:-1394.55px;width:3634px;height:1715px'><div class='t' style='left:2258.10px;top:1404.42px;font-size:33.29px;font-weight:400;color:#16325c;font-family:"Liberation Sans",sans-serif;transform:scaleX(0.9500);transform-origin:0 0;'>Medium</div></div></div><div class='t' style='left:36.60px;top:1490.17px;font-size:33.29px;font-weight:400;color:#0b6bcb;font-family:"Liberation Sans",sans-serif;transform:scaleX(0.9466);transform-origin:0 0;'>Auto Claim-Collision-...</div><div class='t' style='left:484.95px;top:1490.17px;font-size:33.29px;font-weight:400;color:#16325c;font-family:"Liberation Sans",sans-serif;transform:scaleX(0.9458);transform-origin:0 0;'>Open</div><div class='t' style='left:746.52px;top:1490.17px;font-size:33.29px;font-weight:400;color:#e0173b;font-family:"Liberation Sans",sans-serif;transform:scaleX(0.8905);transform-origin:0 0;'>148</div><div class='t' style='left:1131.79px;top:1490.17px;font-size:33.29px;font-weight:400;color:#0b6bcb;font-family:"Liberation Sans",sans-serif;transform:scaleX(0.9061);transform-origin:0 0;'>Cindy Baker</div><div class='t' style='left:1411.00px;top:1490.17px;font-size:33.29px;font-weight:400;color:#16325c;font-family:"Liberation Sans",sans-serif;'>-</div><div class='t' style='left:1666.66px;top:1490.17px;font-size:33.29px;font-weight:400;color:#16325c;font-family:"Liberation Sans",sans-serif;transform:scaleX(0.9392);transform-origin:0 0;'>2021-06-23</div><div class='t' style='left:2011.26px;top:1490.17px;font-size:33.29px;font-weight:400;color:#16325c;font-family:"Liberation Sans",sans-serif;transform:scaleX(0.9350);transform-origin:0 0;'>2021-06-24</div><div style='position:absolute;left:2240px;top:1480.3px;width:80.59999999999991px;height:60.0px;overflow:hidden'><div style='position:absolute;left:-2240px;top:-1480.3px;width:3634px;height:1715px'><div class='t' style='left:2258.10px;top:1490.17px;font-size:33.29px;font-weight:400;color:#16325c;font-family:"Liberation Sans",sans-serif;transform:scaleX(0.9500);transform-origin:0 0;'>Medium</div></div></div><div class='t' style='left:36.60px;top:1575.92px;font-size:33.29px;font-weight:400;color:#0b6bcb;font-family:"Liberation Sans",sans-serif;transform:scaleX(0.9466);transform-origin:0 0;'>Auto Claim-Collision-...</div><div class='t' style='left:485.90px;top:1575.92px;font-size:33.29px;font-weight:400;color:#16325c;font-family:"Liberation Sans",sans-serif;transform:scaleX(0.9067);transform-origin:0 0;'>Adjuster Review</div><div class='t' style='left:746.52px;top:1575.92px;font-size:33.29px;font-weight:400;color:#e0173b;font-family:"Liberation Sans",sans-serif;transform:scaleX(0.8905);transform-origin:0 0;'>148</div><div class='t' style='left:1131.70px;top:1575.92px;font-size:33.29px;font-weight:400;color:#16325c;font-family:"Liberation Sans",sans-serif;'>-</div><div class='t' style='left:1411.00px;top:1575.92px;font-size:33.29px;font-weight:400;color:#16325c;font-family:"Liberation Sans",sans-serif;'>-</div><div class='t' style='left:1666.66px;top:1575.92px;font-size:33.29px;font-weight:400;color:#16325c;font-family:"Liberation Sans",sans-serif;transform:scaleX(0.9392);transform-origin:0 0;'>2021-06-23</div><div class='t' style='left:2011.26px;top:1575.92px;font-size:33.29px;font-weight:400;color:#16325c;font-family:"Liberation Sans",sans-serif;transform:scaleX(0.9350);transform-origin:0 0;'>2021-06-03</div><div style='position:absolute;left:2240px;top:1566.05px;width:80.59999999999991px;height:60.0px;overflow:hidden'><div style='position:absolute;left:-2240px;top:-1566.05px;width:3634px;height:1715px'><div class='t' style='left:2258.10px;top:1575.92px;font-size:33.29px;font-weight:400;color:#16325c;font-family:"Liberation Sans",sans-serif;transform:scaleX(0.9500);transform-origin:0 0;'>Medium</div></div></div><div class='t' style='left:36.60px;top:1661.67px;font-size:33.29px;font-weight:400;color:#0b6bcb;font-family:"Liberation Sans",sans-serif;transform:scaleX(0.9466);transform-origin:0 0;'>Auto Claim-Collision-...</div><div class='t' style='left:484.95px;top:1661.67px;font-size:33.29px;font-weight:400;color:#16325c;font-family:"Liberation Sans",sans-serif;transform:scaleX(0.9458);transform-origin:0 0;'>Open</div><div class='t' style='left:746.52px;top:1661.67px;font-size:33.29px;font-weight:400;color:#e0173b;font-family:"Liberation Sans",sans-serif;transform:scaleX(0.8905);transform-origin:0 0;'>148</div><div class='t' style='left:1131.70px;top:1661.67px;font-size:33.29px;font-weight:400;color:#16325c;font-family:"Liberation Sans",sans-serif;'>-</div><div class='t' style='left:1411.00px;top:1661.67px;font-size:33.29px;font-weight:400;color:#16325c;font-family:"Liberation Sans",sans-serif;'>-</div><div class='t' style='left:1666.66px;top:1661.67px;font-size:33.29px;font-weight:400;color:#16325c;font-family:"Liberation Sans",sans-serif;transform:scaleX(0.9392);transform-origin:0 0;'>2021-06-23</div><div class='t' style='left:2011.26px;top:1661.67px;font-size:33.29px;font-weight:400;color:#16325c;font-family:"Liberation Sans",sans-serif;transform:scaleX(0.9406);transform-origin:0 0;'>2021-05-31</div><div style='position:absolute;left:2240px;top:1651.8px;width:80.59999999999991px;height:60.0px;overflow:hidden'><div style='position:absolute;left:-2240px;top:-1651.8px;width:3634px;height:1715px'><div class='t' style='left:2258.10px;top:1661.67px;font-size:33.29px;font-weight:400;color:#16325c;font-family:"Liberation Sans",sans-serif;transform:scaleX(0.9500);transform-origin:0 0;'>Medium</div></div></div><div class='t' style='left:2523.64px;top:5.63px;font-size:38.08px;font-weight:700;color:#080808;font-family:"Liberation Sans",sans-serif;transform:scaleX(0.9282);transform-origin:0 0;'>Recent Items (4)</div><div class='t' style='left:2613.00px;top:118.67px;font-size:30.96px;font-weight:700;color:#0070d2;font-family:"Liberation Sans",sans-serif;transform:scaleX(0.9355);transform-origin:0 0;'>Auto Claim-Collision-Policy No:001626</div><div class='t' style='left:2613.00px;top:271.57px;font-size:30.96px;font-weight:700;color:#0070d2;font-family:"Liberation Sans",sans-serif;transform:scaleX(0.9396);transform-origin:0 0;'>Auto Claim</div><div class='t' style='left:2613.00px;top:422.97px;font-size:30.96px;font-weight:700;color:#0070d2;font-family:"Liberation Sans",sans-serif;transform:scaleX(0.9371);transform-origin:0 0;'>Auto Claim-Collision-Policy No:001707</div><div class='t' style='left:2613.00px;top:575.27px;font-size:30.96px;font-weight:700;color:#0070d2;font-family:"Liberation Sans",sans-serif;transform:scaleX(0.9371);transform-origin:0 0;'>Auto Claim-Collision-Policy No:002212</div>
<div style='position:absolute;left:-20.50px;top:106.00px;width:107px;height:107px;border-radius:50%;background:#ff9400;box-shadow:1.5px 4.5px 5px rgba(0,0,0,0.42)'></div><div style='position:absolute;left:755.00px;top:328.50px;width:105px;height:105px;border-radius:50%;background:#ff9400;box-shadow:1.5px 4.5px 5px rgba(0,0,0,0.42)'></div><div style='position:absolute;left:1950.75px;top:324.45px;width:112.5px;height:112.5px;border-radius:50%;background:#ff9400;box-shadow:1.5px 4.5px 5px rgba(0,0,0,0.42)'></div><svg style='position:absolute;left:0;top:0;overflow:visible' width='1' height='1'><path d='M810 361.8 V395.8 H804.2 V369.6 L797.2 374.6 V369.4 L805.2 361.8 Z' fill='#fff'/></svg>
<div class='t' style='left:21.11px;top:131.88px;font-size:47.97px;font-weight:400;color:#fff;font-family:"Liberation Sans",sans-serif;transform:scaleX(0.7917);transform-origin:0 0;'>3</div><div class='t' style='left:1993.99px;top:354.29px;font-size:48.84px;font-weight:400;color:#fff;font-family:"Liberation Sans",sans-serif;transform:scaleX(0.9043);transform-origin:0 0;'>2</div>
</body></html>
